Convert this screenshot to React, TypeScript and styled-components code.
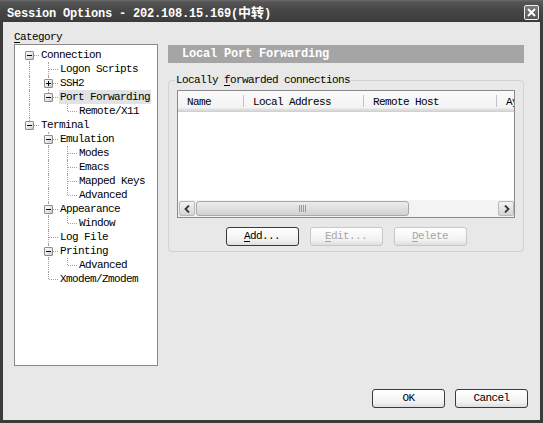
import React from "react";
import styled, { createGlobalStyle, css } from "styled-components";

const GlobalStyle = createGlobalStyle`
  html, body { margin: 0; padding: 0; background: #3a3a3a; }
  * { box-sizing: border-box; }
`;

const MONO = `"Liberation Mono", "DejaVu Sans Mono", "Noto Sans CJK SC", monospace`;

const Window = styled.div`
  width: 543px;
  height: 423px;
  display: flex;
  flex-direction: column;
  background: #3b3b3b;
  font-family: ${MONO};
  font-size: 11px;
  letter-spacing: -0.6px;
  color: #000;
`;

const TitleBar = styled.div`
  height: 22px;
  flex: none;
  display: flex;
  align-items: center;
  justify-content: space-between;
  padding: 0 4px 0 7px;
  background: linear-gradient(#6a6a6a 0px, #555 2px, #474747 10px, #3e3e3e 20px, #3a3a3a 22px);
`;

const Title = styled.span`
  color: #fff;
  font-weight: bold;
  font-size: 12px;
  letter-spacing: -0.2px;
  padding-top: 1px;
`;

const Cjk = styled.span`
  font-family: "Noto Sans CJK SC", sans-serif;
  font-size: 13px;
  letter-spacing: 0;
`;

const CloseBtn = styled.div`
  width: 15px;
  height: 15px;
  margin-top: 2px;
  border: 1px solid #f0f0f0;
  border-radius: 2px;
  background: linear-gradient(#7a7a7a, #555);
  display: flex;
  align-items: center;
  justify-content: center;
`;

const Body = styled.div`
  flex: 1;
  margin: 0 3px 3px 3px;
  background: #e8e8e8;
  display: flex;
  flex-direction: column;
  padding: 7px 0 12px 11px;
`;

const Top = styled.div`
  display: flex;
  gap: 10px;
`;

const LeftCol = styled.div`
  width: 144px;
  display: flex;
  flex-direction: column;
`;

const Label = styled.div`
  height: 15px;
  line-height: 16px;
`;

const U = styled.span`
  text-decoration: underline;
  text-underline-offset: 2px;
`;

const TreeBox = styled.div`
  height: 322px;
  border: 1px solid #8a8a8a;
  background: #fff;
  padding: 3px 0 0 5px;
`;

const Row = styled.div`
  display: flex;
  height: 14px;
  align-items: center;
`;

type GuideProps = { $v: "none" | "full" | "top" | "bottom"; $h?: boolean };

const Guide = styled.div<GuideProps>`
  width: 19px;
  height: 14px;
  flex: none;
  position: relative;
  ${(p) =>
    p.$v !== "none" &&
    css`
      &::before {
        content: "";
        position: absolute;
        left: 9px;
        top: ${p.$v === "bottom" ? "7px" : "0"};
        height: ${p.$v === "full" ? "14px" : "7px"};
        border-left: 1px dotted #a0a0a0;
      }
    `}
  ${(p) =>
    p.$h &&
    css`
      &::after {
        content: "";
        position: absolute;
        left: 10px;
        top: 7px;
        width: 9px;
        border-top: 1px dotted #a0a0a0;
      }
    `}
`;

const Expander = styled.div`
  position: absolute;
  left: 5px;
  top: 3px;
  width: 9px;
  height: 9px;
  border: 1px solid #8c8c8c;
  border-radius: 1px;
  background: linear-gradient(135deg, #fff 0%, #e4e4e4 60%, #c8c8c8 100%);
  z-index: 1;
`;

const ExpH = styled.div`
  position: absolute;
  left: 1px;
  top: 3px;
  width: 5px;
  height: 1px;
  background: #000;
`;

const ExpV = styled.div`
  position: absolute;
  left: 3px;
  top: 1px;
  width: 1px;
  height: 5px;
  background: #000;
`;

const ItemText = styled.span<{ $sel?: boolean }>`
  margin-left: 1px;
  padding: 0 1px;
  height: 14px;
  line-height: 15px;
  white-space: nowrap;
  background: ${(p) => (p.$sel ? "#e2e2e2" : "transparent")};
`;

const RightCol = styled.div`
  width: 356px;
  display: flex;
  flex-direction: column;
  padding-top: 16px;
`;

const PanelHeader = styled.div`
  height: 18px;
  background: #a5a5a5;
  color: #fff;
  font-weight: bold;
  font-size: 12px;
  letter-spacing: -0.2px;
  line-height: 19px;
  padding-left: 14px;
`;

const Group = styled.fieldset`
  margin: 10px 0 0 0;
  border: 1px solid #d2d2d2;
  border-radius: 4px;
  padding: 0 8px 5px 8px;
  min-width: 0;
`;

const Legend = styled.legend`
  padding: 0 1px;
  margin-left: -2px;
  line-height: 15px;
  height: 14px;
`;

const ListView = styled.div`
  margin-top: 3px;
  height: 128px;
  border: 1px solid #8a8a8a;
  background: #fff;
  display: flex;
  flex-direction: column;
  overflow: hidden;
`;

const HeaderRow = styled.div`
  height: 21px;
  flex: none;
  display: flex;
  background: linear-gradient(#fafafa 0px, #f4f4f4 17px, #e2e2e2 18px, #d6d6d6 20px, #cbcbcb 21px);
  white-space: nowrap;
`;

const Col = styled.div<{ $w: number; $last?: boolean }>`
  width: ${(p) => p.$w}px;
  flex: none;
  display: flex;
  align-items: center;
  padding: 1px 0 0 9px;
  position: relative;
  overflow: hidden;
  ${(p) =>
    !p.$last &&
    css`
      &::after {
        content: "";
        position: absolute;
        right: 0;
        top: 4px;
        height: 12px;
        width: 1px;
        background: #c4c4c4;
      }
    `}
`;

const ListBody = styled.div`
  flex: 1;
`;

const HScroll = styled.div`
  height: 17px;
  flex: none;
  display: flex;
  align-items: stretch;
  padding: 1px 0 1px 1px;
  background: #f3f3f3;
`;

const ArrowBtn = styled.div`
  width: 16px;
  flex: none;
  border: 1px solid #b8b8b8;
  border-radius: 2px;
  background: linear-gradient(#f4f4f4, #d4d4d4);
  display: flex;
  align-items: center;
  justify-content: center;
`;

const Track = styled.div`
  flex: 1;
  display: flex;
  padding: 0 1px;
`;

const Thumb = styled.div`
  width: 213px;
  border: 1px solid #a8a8a8;
  border-radius: 3px;
  background: linear-gradient(#ececec, #d2d2d2);
  display: flex;
  align-items: center;
  justify-content: center;
`;

const ButtonRow = styled.div`
  display: flex;
  justify-content: center;
  gap: 11px;
  margin-top: 9px;
`;

const Btn = styled.button<{ $disabled?: boolean; $default?: boolean }>`
  width: 73px;
  height: 19px;
  padding: 0;
  font-family: ${MONO};
  font-size: 11px;
  letter-spacing: -0.6px;
  border-radius: 3px;
  border: 1px solid ${(p) => (p.$disabled ? "#c8c8c8" : "#3a3a3a")};
  color: ${(p) => (p.$disabled ? "#a8a8a8" : "#000")};
  background: linear-gradient(#ffffff, #f2f2f2 70%, #dedede);
  line-height: 17px;
`;

const Footer = styled.div`
  margin-top: auto;
  display: flex;
  justify-content: flex-end;
  gap: 10px;
  padding-right: 12px;
`;

type Node = {
  label: string;
  children?: Node[];
  selected?: boolean;
};

const tree: Node[] = [
  {
    label: "Connection",
    children: [
      { label: "Logon Scripts" },
      { label: "SSH2", children: [] },
      { label: "Port Forwarding", selected: true, children: [{ label: "Remote/X11" }] },
    ],
  },
  {
    label: "Terminal",
    children: [
      {
        label: "Emulation",
        children: [{ label: "Modes" }, { label: "Emacs" }, { label: "Mapped Keys" }, { label: "Advanced" }],
      },
      { label: "Appearance", children: [{ label: "Window" }] },
      { label: "Log File" },
      { label: "Printing", children: [{ label: "Advanced" }] },
      { label: "Xmodem/Zmodem" },
    ],
  },
];

function renderTree(nodes: Node[], ancestorsHaveNext: boolean[], isRoot: boolean): React.ReactNode[] {
  const out: React.ReactNode[] = [];
  nodes.forEach((n, i) => {
    const last = i === nodes.length - 1;
    const first = i === 0;
    let v: GuideProps["$v"] = last ? "top" : "full";
    if (isRoot && first) v = last ? "none" : "bottom";
    const hasKids = n.children !== undefined;
    const expanded = hasKids && n.children!.length > 0;
    const key = ancestorsHaveNext.join("") + i + n.label;
    out.push(
      <Row key={key}>
        {ancestorsHaveNext.map((hasNext, j) => (
          <Guide key={j} $v={hasNext ? "full" : "none"} />
        ))}
        <Guide $v={v} $h>
          {hasKids && (
            <Expander>
              <ExpH />
              {!expanded && <ExpV />}
            </Expander>
          )}
        </Guide>
        <ItemText $sel={n.selected}>{n.label}</ItemText>
      </Row>
    );
    if (expanded) {
      out.push(...renderTree(n.children!, [...ancestorsHaveNext, !last], false));
    }
  });
  return out;
}

const Chevron = ({ dir }: { dir: "l" | "r" }) => (
  <svg width="7" height="8" viewBox="0 0 7 8">
    <path
      d={dir === "l" ? "M5 0.5 L1.5 4 L5 7.5" : "M2 0.5 L5.5 4 L2 7.5"}
      fill="none"
      stroke="#333"
      strokeWidth="1.8"
    />
  </svg>
);

const Grip = () => (
  <svg width="8" height="7" viewBox="0 0 8 7">
    {[0, 2, 4, 6].map((x) => (
      <rect key={x} x={x} y={0} width={1} height={7} fill="#9a9a9a" />
    ))}
  </svg>
);

const CloseIcon = () => (
  <svg width="9" height="9" viewBox="0 0 9 9">
    <path d="M1 1 L8 8 M8 1 L1 8" stroke="#fff" strokeWidth="2" />
  </svg>
);

export default function App() {
  return (
    <>
      <GlobalStyle />
      <Window>
        <TitleBar>
          <Title>
            Session Options - 202.108.15.169(<Cjk>中转</Cjk>)
          </Title>
          <CloseBtn>
            <CloseIcon />
          </CloseBtn>
        </TitleBar>
        <Body>
          <Top>
            <LeftCol>
              <Label>
                <U>C</U>ategory
              </Label>
              <TreeBox>{renderTree(tree, [], true)}</TreeBox>
            </LeftCol>
            <RightCol>
              <PanelHeader>Local Port Forwarding</PanelHeader>
              <Group>
                <Legend>
                  Locally <U>f</U>orwarded connections
                </Legend>
                <ListView>
                  <HeaderRow>
                    <Col $w={66}>Name</Col>
                    <Col $w={120}>Local Address</Col>
                    <Col $w={133}>Remote Host</Col>
                    <Col $w={30} $last>
                      Ay
                    </Col>
                  </HeaderRow>
                  <ListBody />
                  <HScroll>
                    <ArrowBtn>
                      <Chevron dir="l" />
                    </ArrowBtn>
                    <Track>
                      <Thumb>
                        <Grip />
                      </Thumb>
                    </Track>
                    <ArrowBtn>
                      <Chevron dir="r" />
                    </ArrowBtn>
                  </HScroll>
                </ListView>
                <ButtonRow>
                  <Btn $default>
                    <U>A</U>dd...
                  </Btn>
                  <Btn $disabled>
                    <U>E</U>dit...
                  </Btn>
                  <Btn $disabled>
                    <U>D</U>elete
                  </Btn>
                </ButtonRow>
              </Group>
            </RightCol>
          </Top>
          <Footer>
            <Btn $default>OK</Btn>
            <Btn>Cancel</Btn>
          </Footer>
        </Body>
      </Window>
    </>
  );
}
